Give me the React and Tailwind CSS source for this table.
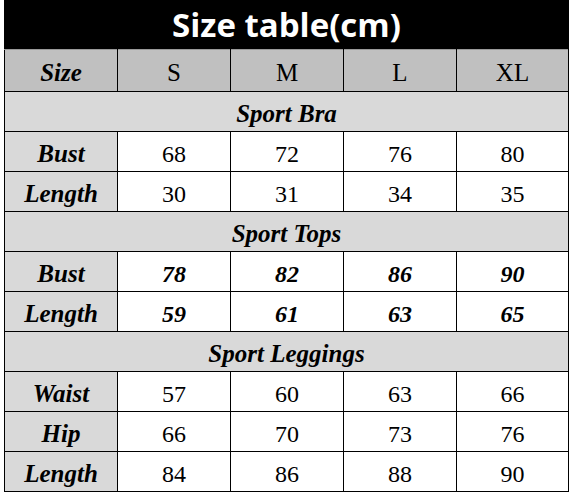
export default function App() {
  const serif = { fontFamily: '"Liberation Serif", "Times New Roman", serif' };

  const sections = [
    {
      titre: "Sport Bra",
      gras: false,
      lignes: [
        { nom: "Bust", valeurs: ["68", "72", "76", "80"] },
        { nom: "Length", valeurs: ["30", "31", "34", "35"] },
      ],
    },
    {
      titre: "Sport Tops",
      gras: true,
      lignes: [
        { nom: "Bust", valeurs: ["78", "82", "86", "90"] },
        { nom: "Length", valeurs: ["59", "61", "63", "65"] },
      ],
    },
    {
      titre: "Sport Leggings",
      gras: false,
      lignes: [
        { nom: "Waist", valeurs: ["57", "60", "63", "66"] },
        { nom: "Hip", valeurs: ["66", "70", "73", "76"] },
        { nom: "Length", valeurs: ["84", "86", "88", "90"] },
      ],
    },
  ];

  return (
    <div className="w-[572px] h-[493px] bg-white pl-[4px]">
      {/* Titre */}
      <div className="w-[565px] h-[49px] bg-black flex items-center justify-center">
        <h1 className="text-white font-bold text-[33px] leading-none" style={{ fontFamily: '"Open Sans", sans-serif' }}>
          Size table(cm)
        </h1>
      </div>

      {/* Tableau */}
      <table className="table-fixed border-collapse w-[564px] text-black" style={serif}>
        <colgroup>
          <col className="w-[113px]" />
          <col className="w-[113px]" />
          <col className="w-[113px]" />
          <col className="w-[113px]" />
          <col className="w-[112px]" />
        </colgroup>
        <tbody>
          <tr className="h-[42px] bg-[#c0c0c0]">
            <td className="border border-black border-t-[#9a9a9a] text-center text-[25px] font-bold italic leading-none pt-[4px]">Size</td>
            {["S", "M", "L", "XL"].map((t) => (
              <td key={t} className="border border-black border-t-[#9a9a9a] text-center text-[25px] leading-none pt-[4px]">{t}</td>
            ))}
          </tr>
          {sections.map((s) => (
            <>
              <tr key={s.titre} className="h-[40px] bg-[#d9d9d9]">
                <td colSpan={5} className="border border-black text-center text-[25px] font-bold italic leading-none pt-[3px]">{s.titre}</td>
              </tr>
              {s.lignes.map((l) => (
                <tr key={s.titre + l.nom} className="h-[40px]">
                  <td className="border border-black bg-[#d9d9d9] text-center text-[25px] font-bold italic leading-none pt-[3px]">{l.nom}</td>
                  {l.valeurs.map((v, i) => (
                    <td
                      key={i}
                      className={`border border-black bg-white text-center text-[24px] leading-none pt-[4px] ${s.gras ? "font-bold italic" : ""}`}
                    >
                      {v}
                    </td>
                  ))}
                </tr>
              ))}
            </>
          ))}
        </tbody>
      </table>
    </div>
  );
}
